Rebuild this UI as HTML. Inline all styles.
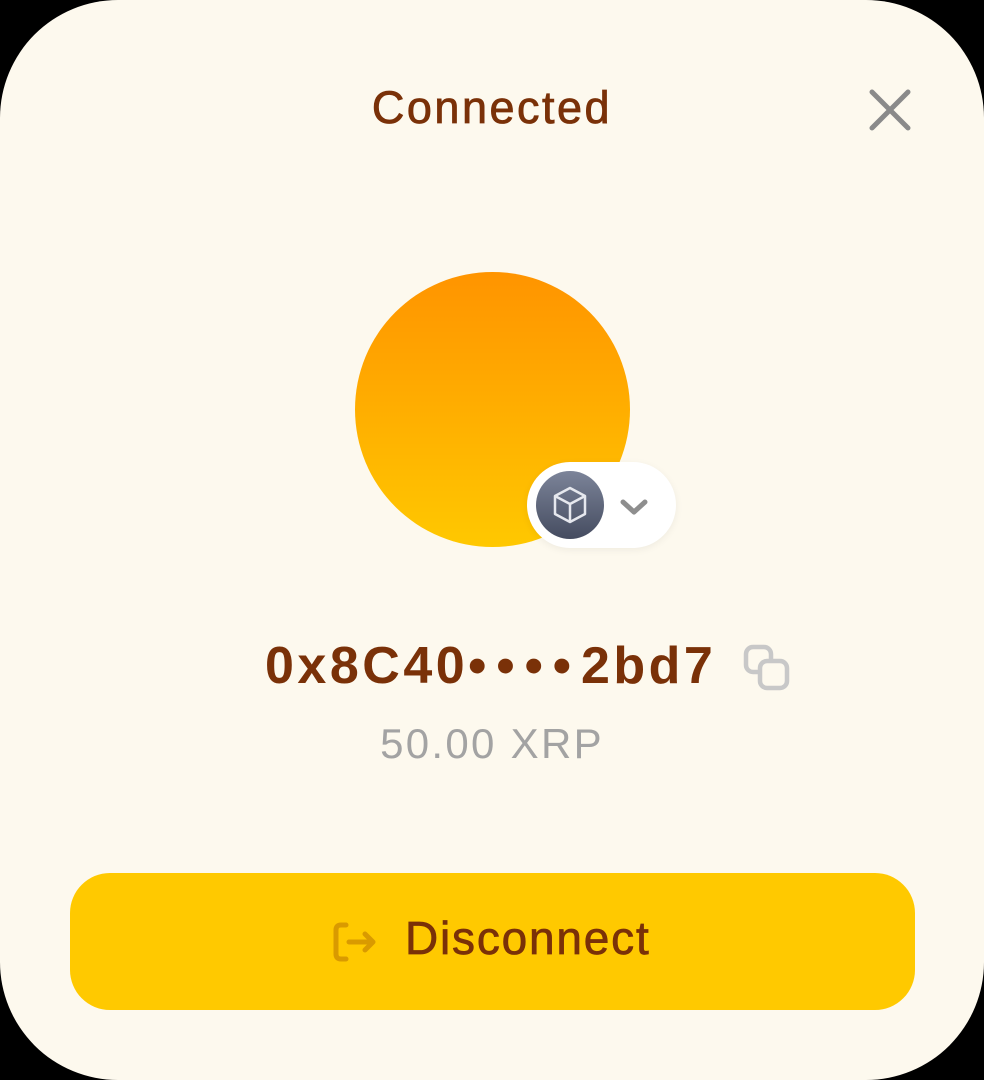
<!DOCTYPE html>
<html><head><meta charset="utf-8"><style>
html,body{margin:0;padding:0;background:#000;}
body{width:984px;height:1080px;position:relative;overflow:hidden;font-family:"Liberation Sans",sans-serif;}
.card{position:absolute;left:0;top:0;width:984px;height:1080px;background:#fdf9ee;border-radius:118px;}
.title{position:absolute;top:82px;left:0;width:984px;text-align:center;font-size:45px;color:#7a3108;letter-spacing:2.5px;-webkit-text-stroke:0.8px #7a3108;}
.close{position:absolute;left:868px;top:88px;}
.avatar{position:absolute;left:355px;top:272px;width:275px;height:275px;border-radius:50%;background:linear-gradient(180deg,#ff9400,#ffc800);}
.pill{position:absolute;left:527px;top:462px;width:149px;height:86px;border-radius:43px;background:#fff;box-shadow:0 2px 8px rgba(0,0,0,.06);}
.net{position:absolute;left:9px;top:9px;width:68px;height:68px;border-radius:50%;background:linear-gradient(180deg,#7c8499,#454c60);}
.addr{position:absolute;top:636px;left:265px;font-size:52px;font-weight:bold;color:#7a3108;letter-spacing:3.5px;white-space:nowrap;}
.addr b{letter-spacing:10px;}
.copy{position:absolute;left:743px;top:644px;}
.bal{position:absolute;top:720px;left:0;width:984px;text-align:center;font-size:42px;color:#a3a3a3;letter-spacing:2.3px;}
.btn{position:absolute;left:70px;top:873px;width:845px;height:137px;border-radius:40px;background:#ffc900;}
.btn span{position:absolute;left:405px;top:38px;font-size:46px;color:#7a3108;letter-spacing:1.8px;-webkit-text-stroke:0.7px #7a3108;white-space:nowrap;}
</style></head><body>
<div class="card">
<div class="title">Connected</div>
<svg class="close" width="44" height="44" viewBox="0 0 44 44"><path d="M4 4L40 40M40 4L4 40" stroke="#8a8a8a" stroke-width="5" stroke-linecap="round"/></svg>
<div class="avatar"></div>
<div class="pill">
 <div class="net">
  <svg width="68" height="68" viewBox="0 0 68 68"><g fill="none" stroke="#e6e8ee" stroke-width="2.5" stroke-linejoin="round"><path d="M34 17L49 25V43L34 51L19 43V25Z"/><path d="M19 25L34 33L49 25M34 33V51"/></g></svg>
 </div>
 <svg style="position:absolute;left:92px;top:36px" width="30" height="18" viewBox="0 0 30 18"><path d="M4 4L15 14L26 4" fill="none" stroke="#8e8e8e" stroke-width="5" stroke-linecap="round" stroke-linejoin="round"/></svg>
</div>
<div class="addr">0x8C40<b>••••</b>2bd7</div>
<svg class="copy" width="48" height="48" viewBox="0 0 48 48"><g fill="none" stroke="#c8c8c8" stroke-width="4.5"><rect x="3" y="3" width="25" height="25" rx="7"/><rect x="17" y="17" width="27" height="27" rx="7" fill="#fdf9ee"/></g></svg>
<div class="bal">50.00 XRP</div>
<div class="btn">
 <svg style="position:absolute;left:262px;top:48px" width="48" height="42" viewBox="0 0 48 42"><g fill="none" stroke="#d99a00" stroke-width="5" stroke-linecap="round" stroke-linejoin="round"><path d="M14 4H9Q4 4 4 9V33Q4 38 9 38H14"/><path d="M17 21H41M33 13L41 21L33 29"/></g></svg>
 <span style="left:335px">Disconnect</span>
</div>
</div>
</body></html>
